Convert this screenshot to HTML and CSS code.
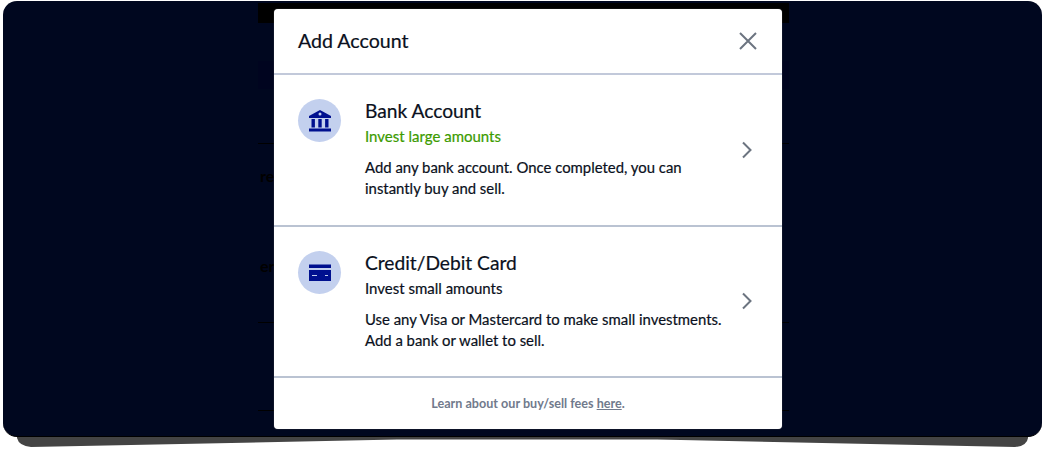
FILE: index.html
```html
<!DOCTYPE html>
<html lang="en">
<head>
  <meta charset="UTF-8" />
  <title>Add Account</title>
  <link rel="stylesheet" href="styles.css">
</head>
<body>
  <div class="page">
    <!-- lifted corner shadow under the frame -->
    <svg class="lift" width="1011" height="28" viewBox="0 0 1011 28">
      <path d="M0 0 H1011 V18 Q1010 26 998 27 L640 19.5 H380 L14 27 Q2 26 0 18 Z" />
    </svg>

    <div class="frame">
      <div class="behind">
        <div class="behind-top"></div>
        <div class="behind-band"></div>
        <span class="behind-text behind-text-a">re</span>
        <span class="behind-text behind-text-b">er</span>
        <div class="behind-line behind-line-a"></div>
        <div class="behind-line behind-line-b"></div>
        <div class="behind-line behind-line-c"></div>
      </div>

      <div class="modal">
        <div class="modal-head">
          <h1>Add Account</h1>
          <svg class="close" width="20" height="20" viewBox="0 0 20 20">
            <path d="M2 2 L18 18 M18 2 L2 18" />
          </svg>
        </div>

        <div class="option">
          <div class="option-icon">
            <svg width="24" height="24" viewBox="0 0 24 24">
              <path fill-rule="evenodd" d="M12 1 L23 7 V9 H1 V7 Z M12 3.4 A1.5 1.5 0 1 0 12 6.4 A1.5 1.5 0 1 0 12 3.4 Z" />
              <rect x="3.5" y="10" width="3.4" height="8.5" />
              <rect x="10.3" y="10" width="3.4" height="8.5" />
              <rect x="17.1" y="10" width="3.4" height="8.5" />
              <rect x="1" y="19.5" width="22" height="3" />
            </svg>
          </div>
          <div class="option-body">
            <h2>Bank Account</h2>
            <div class="option-tag green">Invest large amounts</div>
            <p>Add any bank account. Once completed, you can<br>instantly buy and sell.</p>
          </div>
          <svg class="chevron" width="12" height="18" viewBox="0 0 12 18">
            <path d="M2 1.5 L9.5 9 L2 16.5" />
          </svg>
        </div>

        <div class="option">
          <div class="option-icon">
            <svg width="24" height="24" viewBox="0 0 24 24">
              <rect x="1" y="4.5" width="22" height="3.5" />
              <path fill-rule="evenodd" d="M1 10 H23 V21 H1 Z M4 15 V16 H9 V15 Z M17 15 V16 H20 V15 Z" />
            </svg>
          </div>
          <div class="option-body">
            <h2>Credit/Debit Card</h2>
            <div class="option-tag">Invest small amounts</div>
            <p>Use any Visa or Mastercard to make small investments.<br>Add a bank or wallet to sell.</p>
          </div>
          <svg class="chevron" width="12" height="18" viewBox="0 0 12 18">
            <path d="M2 1.5 L9.5 9 L2 16.5" />
          </svg>
        </div>

        <div class="modal-foot">Learn about our buy/sell fees <a href="#">here</a>.</div>
      </div>
    </div>
  </div>
</body>
</html>
```

FILE: styles.css
```css
body {
  margin: 0;
  background: white;
  font-family: 'Lato', sans-serif;
}

.page {
  position: relative;
  height: 450px;
  padding: 1px 0 0 3px;
  box-sizing: border-box;
}

.lift {
  position: absolute;
  left: 17px;
  top: 420px;
  fill: #444;
}

.frame {
  position: relative;
  width: 1039px;
  height: 436px;
  background: #00071f;
  border-radius: 14px;
  border-bottom: 1px solid #000;
  box-sizing: border-box;
  display: flex;
  justify-content: center;
  padding: 8px 0 0 11px;
}

.behind {
  position: absolute;
  left: 255px;
  top: 0;
  width: 531px;
  height: 100%;
}

.behind-top {
  height: 20px;
  margin-top: 2px;
  background: #000;
}

.behind-band {
  position: absolute;
  left: 0;
  right: 0;
  top: 60px;
  height: 28px;
  background: #00041f;
}

.behind-text {
  position: absolute;
  left: 2px;
  font-size: 16px;
  font-weight: 700;
  color: #000;
}

.behind-text-a { top: 165px; }
.behind-text-b { top: 255px; }

.behind-line {
  position: absolute;
  left: 0;
  right: 0;
  height: 1px;
  background: #000;
}

.behind-line-a { top: 142px; }
.behind-line-b { top: 321px; }
.behind-line-c { top: 409px; }

.modal {
  position: relative;
  width: 508px;
  height: 420px;
  background: white;
  border-radius: 4px;
  box-shadow: 0 0 1px #888;
  display: flex;
  flex-direction: column;
}

.modal-head {
  height: 66px;
  flex-shrink: 0;
  box-sizing: border-box;
  padding: 0 24px 1px 24px;
  border-bottom: 2px solid #c2c9da;
  display: flex;
  align-items: center;
  justify-content: space-between;
}

h1 {
  margin: 0;
  font-size: 19.6px;
  font-weight: 400;
  color: #0a1020;
  -webkit-text-stroke: 0.2px #0a1020;
}

.close path,
.chevron path {
  fill: none;
  stroke: #6c7480;
  stroke-width: 2;
}

.option {
  height: 151.5px;
  flex-shrink: 0;
  box-sizing: border-box;
  padding: 24px 29px 0 24px;
  border-bottom: 2px solid #bac3d2;
  display: flex;
  align-items: flex-start;
}

.option-icon {
  width: 43px;
  height: 43px;
  flex-shrink: 0;
  margin-right: 24px;
  border-radius: 50%;
  background: #c3d0ee;
  color: #00108f;
  display: flex;
  align-items: center;
  justify-content: center;
}

.option-icon svg {
  fill: currentColor;
}

.option-body {
  flex: 1;
}

h2 {
  margin: -1px 0 0 0;
  font-size: 19.2px;
  line-height: 26px;
  font-weight: 400;
  color: #0a1020;
  -webkit-text-stroke: 0.2px #0a1020;
}

.option-tag {
  margin-top: 2px;
  font-size: 15px;
  line-height: 20px;
  color: #0a1020;
  -webkit-text-stroke: 0.2px currentColor;
}

.green {
  color: #3c9b00;
}

.option p {
  margin: 11px 0 0 0;
  font-size: 14.9px;
  line-height: 21px;
  color: #0a1020;
  -webkit-text-stroke: 0.2px #0a1020;
}

.chevron {
  margin-top: 41.5px;
  flex-shrink: 0;
}

.modal-foot {
  flex: 1;
  text-align: center;
  padding-top: 18px;
  font-size: 12.6px;
  font-weight: 700;
  color: #717a8c;
}

.modal-foot a {
  color: #717a8c;
}
```
